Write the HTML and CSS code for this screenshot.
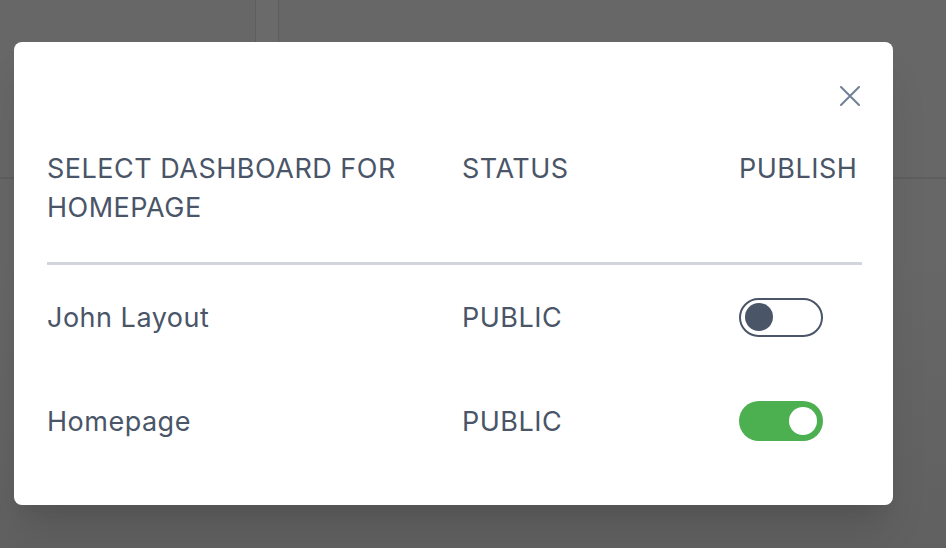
FILE: index.html
```html
<!DOCTYPE html>
<html lang="en">
<head>
<meta charset="utf-8">
<title>Select dashboard for homepage</title>
<link rel="stylesheet" href="styles.css">
</head>
<body>
<div class="app">
  <div class="app-head">
    <div class="head-side"></div>
    <div class="head-band"></div>
    <div class="head-main"></div>
  </div>
  <div class="app-body"></div>
</div>
<div class="overlay">
  <div class="modal">
    <div class="modal-top">
      <button class="close" aria-label="Close">
        <svg width="20" height="20" viewBox="0 0 20 20"><path d="M1 1 L19 19 M19 1 L1 19" stroke="#718096" stroke-width="2" fill="none" stroke-linecap="round"/></svg>
      </button>
    </div>
    <div class="table">
      <div class="th">SELECT DASHBOARD FOR HOMEPAGE</div>
      <div class="th">STATUS</div>
      <div class="th">PUBLISH</div>

      <div class="td">John Layout</div>
      <div class="td">PUBLIC</div>
      <div class="td"><span class="toggle off"><span class="knob"></span></span></div>

      <div class="td">Homepage</div>
      <div class="td">PUBLIC</div>
      <div class="td"><span class="toggle on"><span class="knob"></span></span></div>
    </div>
  </div>
</div>
</body>
</html>
```
FILE: styles.css
```css
* { box-sizing: border-box; }
html, body { margin: 0; padding: 0; }
body {
  width: 946px;
  height: 548px;
  overflow: hidden;
  font-family: Inter, "Noto Sans", "Liberation Sans", sans-serif;
  background: #676767;
  position: relative;
}
.app {
  display: flex;
  flex-direction: column;
  height: 548px;
}
.app-head {
  display: grid;
  grid-template-columns: 256px 23px 1fr;
  height: 179px;
  border-bottom: 2px solid #5e5e5e;
}
.head-side { border-right: 1px solid #5e5e5e; }
.head-band { background: #6a6a6a; border-right: 1px solid #5e5e5e; }
.app-body { flex: 1; }

.overlay {
  position: absolute;
  inset: 0;
  padding: 42px 0 0 14px;
  background: linear-gradient(to bottom, rgba(0,0,0,0) 45%, rgba(10,10,20,0.07) 100%);
}
.modal {
  width: 879px;
  height: 463px;
  background: #ffffff;
  border-radius: 8px;
  padding: 0 31px 0 33px;
  box-shadow: 0 30px 40px -8px rgba(0,0,0,0.12), 0 15px 15px -8px rgba(0,0,0,0.05);
}
.modal-top {
  display: flex;
  justify-content: flex-end;
  padding: 44px 2px 0 0;
  height: 107px;
}
.close {
  width: 20px;
  height: 20px;
  padding: 0;
  border: 0;
  background: none;
  display: block;
}
.close svg { display: block; }

.table {
  display: grid;
  grid-template-columns: 415px 277px 123px;
  color: #4a5568;
  font-size: 27px;
  letter-spacing: 0.5px;
  line-height: 39px;
}
.th {
  padding-bottom: 35px;
  border-bottom: 3px solid #d3d5dc;
  padding-right: 8px;
}
.td {
  height: 104px;
  display: flex;
  align-items: center;
}
.toggle {
  display: block;
  width: 84px;
  height: 39px;
  border-radius: 20px;
  position: relative;
}
.toggle.off {
  border: 2px solid #4a5568;
  background: #ffffff;
}
.toggle.on {
  background: #4caf50;
  height: 40px;
}
.knob {
  position: absolute;
  width: 28px;
  height: 28px;
  border-radius: 50%;
  top: 50%;
  transform: translateY(-50%);
}
.off .knob { left: 4px; background: #4a5568; }
.on .knob { right: 6px; background: #ffffff; }
```
